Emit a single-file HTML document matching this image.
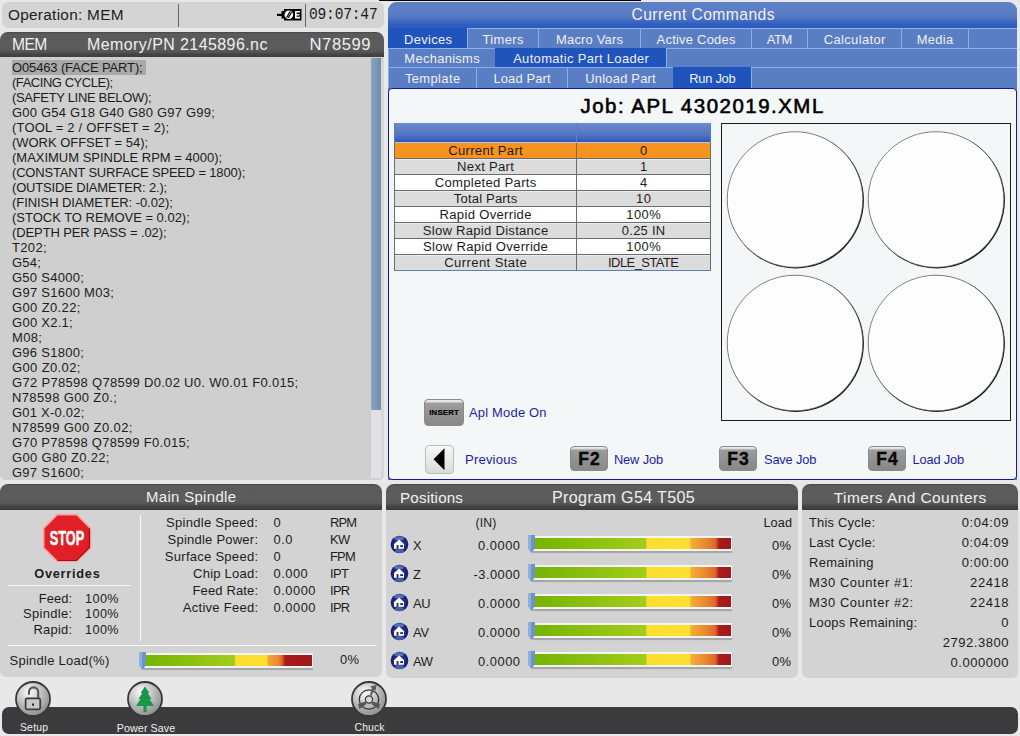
<!DOCTYPE html>
<html><head><meta charset="utf-8">
<style>
*{margin:0;padding:0;box-sizing:border-box}
html,body{width:1020px;height:736px;overflow:hidden;background:#e8e8e8;font-family:"Liberation Sans",sans-serif;color:#1c1c1c}
.a{position:absolute}
.t{position:absolute;white-space:nowrap;line-height:1}
.hdr{background:linear-gradient(#484848 0,#5b5b5b 2px,#5c5c5c 60%,#555 78%,#454545 84%,#3c3c3c 100%)}
.mono{font-family:"Liberation Mono",monospace}
.tab{position:absolute;height:20px;background:#5a7ec3;border-top:1px solid #8daee6;border-left:1px solid #8daee6}
.tab.on{background:#1f54bc;border-color:#1f54bc}
.key{position:absolute;border-radius:4px;background:linear-gradient(#f0f0f0,#d8d8d8 8%,#9c9c9c 14%,#939393 50%,#888 100%);border:1px solid #8a8a8a}
.lnk{position:absolute;color:#1e1ea0;white-space:nowrap;line-height:1}
.w{color:#f0f0f0}
</style></head><body>
<div class="a" style="left:379px;top:0;width:262px;height:1.2px;background:#000"></div>
<div class="a" style="left:2px;top:2px;width:382px;height:26px;background:#d4d4d4;border-radius:6px"></div>
<div class="t" style="left:8.00px;top:6.81px;font-size:15.37px;letter-spacing:0.281px;">Operation: MEM</div>
<div class="a" style="left:178px;top:4px;width:1px;height:23px;background:#666"></div>
<div class="a" style="left:305px;top:4px;width:1px;height:23px;background:#666"></div>
<svg class="a" style="left:276px;top:8px" width="27" height="14" viewBox="0 0 27 14">
<rect x="1" y="5.8" width="6" height="2.2" fill="#000"/>
<path d="M5.5 3 H8 V1 H25.5 V12.5 H8 V10.5 H5.5 Z" fill="#000"/>
<circle cx="12.8" cy="6.7" r="4.3" fill="#fff"/>
<path d="M10.6 9.6 L14.2 3.4 M12.3 9.9 L15.6 4.2" stroke="#000" stroke-width="1.1"/>
<path d="M19 3 H24 V4.6 H20.6 V5.9 H23.4 V7.4 H20.6 V8.8 H24 V10.4 H19 Z" fill="#fff"/>
</svg>
<div class="t mono" style="left:309px;top:6.5px;font-size:14.6px;transform:scaleY(1.15);transform-origin:0 50%;letter-spacing:-0.2px">09:07:47</div>
<div class="a hdr" style="left:0;top:32px;width:384px;height:25.5px;border-radius:8px 8px 0 0"></div>
<div class="t w" style="left:12.00px;top:36.71px;font-size:15.58px;letter-spacing:-0.566px;">MEM</div>
<div class="t w" style="left:87.00px;top:37.02px;font-size:15.95px;letter-spacing:0.450px;">Memory/PN 2145896.nc</div>
<div class="t w" style="left:309.50px;top:36.68px;font-size:16.64px;letter-spacing:0.565px;">N78599</div>
<div class="a" style="left:0;top:57px;width:384px;height:422.5px;background:#cfcfcf;border-radius:0 0 5px 5px"></div>
<div class="a" style="left:381px;top:57px;width:3px;height:420px;background:#d6d6d6"></div>
<div class="a" style="left:370.5px;top:58px;width:10.5px;height:420px;background:#e0e0e6"></div>
<div class="a" style="left:370.5px;top:58px;width:10.5px;height:352px;background:linear-gradient(90deg,#8aa6c0,#7b98b6 50%,#6f8cab)"></div>
<div class="a" style="left:12px;top:60px;width:134px;height:15px;background:#a9a9a9"></div>
<div class="t" style="left:12.00px;top:61.01px;font-size:12.99px;letter-spacing:-0.130px;">O05463 (FACE PART);</div>
<div class="t" style="left:12.00px;top:76.01px;font-size:12.99px;letter-spacing:-0.450px;">(FACING CYCLE);</div>
<div class="t" style="left:12.00px;top:91.01px;font-size:12.99px;letter-spacing:-0.314px;">(SAFETY LINE BELOW);</div>
<div class="t" style="left:12.00px;top:106.01px;font-size:12.99px;letter-spacing:0.214px;">G00 G54 G18 G40 G80 G97 G99;</div>
<div class="t" style="left:12.00px;top:121.01px;font-size:12.99px;letter-spacing:0.194px;">(TOOL = 2 / OFFSET = 2);</div>
<div class="t" style="left:12.00px;top:136.01px;font-size:12.99px;letter-spacing:-0.024px;">(WORK OFFSET = 54);</div>
<div class="t" style="left:12.00px;top:151.01px;font-size:12.99px;letter-spacing:-0.006px;">(MAXIMUM SPINDLE RPM = 4000);</div>
<div class="t" style="left:12.00px;top:166.01px;font-size:12.99px;letter-spacing:-0.176px;">(CONSTANT SURFACE SPEED = 1800);</div>
<div class="t" style="left:12.00px;top:181.01px;font-size:12.99px;letter-spacing:-0.160px;">(OUTSIDE DIAMETER: 2.);</div>
<div class="t" style="left:12.00px;top:196.01px;font-size:12.99px;letter-spacing:-0.061px;">(FINISH DIAMETER: -0.02);</div>
<div class="t" style="left:12.00px;top:211.01px;font-size:12.99px;letter-spacing:-0.004px;">(STOCK TO REMOVE = 0.02);</div>
<div class="t" style="left:12.00px;top:226.01px;font-size:12.99px;letter-spacing:-0.099px;">(DEPTH PER PASS = .02);</div>
<div class="t" style="left:12.00px;top:241.01px;font-size:12.99px;letter-spacing:0.357px;">T202;</div>
<div class="t" style="left:12.00px;top:256.01px;font-size:12.99px;letter-spacing:0.264px;">G54;</div>
<div class="t" style="left:12.00px;top:271.01px;font-size:12.99px;letter-spacing:0.275px;">G50 S4000;</div>
<div class="t" style="left:12.00px;top:286.01px;font-size:12.99px;letter-spacing:0.281px;">G97 S1600 M03;</div>
<div class="t" style="left:12.00px;top:301.01px;font-size:12.99px;letter-spacing:0.381px;">G00 Z0.22;</div>
<div class="t" style="left:12.00px;top:316.01px;font-size:12.99px;letter-spacing:0.278px;">G00 X2.1;</div>
<div class="t" style="left:12.00px;top:331.01px;font-size:12.99px;letter-spacing:0.354px;">M08;</div>
<div class="t" style="left:12.00px;top:346.01px;font-size:12.99px;letter-spacing:0.275px;">G96 S1800;</div>
<div class="t" style="left:12.00px;top:361.01px;font-size:12.99px;letter-spacing:0.381px;">G00 Z0.02;</div>
<div class="t" style="left:12.00px;top:376.01px;font-size:12.99px;letter-spacing:0.313px;">G72 P78598 Q78599 D0.02 U0. W0.01 F0.015;</div>
<div class="t" style="left:12.00px;top:391.01px;font-size:12.99px;letter-spacing:0.373px;">N78598 G00 Z0.;</div>
<div class="t" style="left:12.00px;top:406.01px;font-size:12.99px;letter-spacing:0.233px;">G01 X-0.02;</div>
<div class="t" style="left:12.00px;top:421.01px;font-size:12.99px;letter-spacing:0.396px;">N78599 G00 Z0.02;</div>
<div class="t" style="left:12.00px;top:436.01px;font-size:12.99px;letter-spacing:0.304px;">G70 P78598 Q78599 F0.015;</div>
<div class="t" style="left:12.00px;top:451.01px;font-size:12.99px;letter-spacing:0.331px;">G00 G80 Z0.22;</div>
<div class="t" style="left:12.00px;top:466.01px;font-size:12.99px;letter-spacing:0.275px;">G97 S1600;</div>
<div class="a" style="left:388px;top:2px;width:629px;height:478px;background:#5b7fc4;border-radius:9px 9px 0 0"></div>
<div class="a" style="left:388px;top:2px;width:629px;height:26px;background:linear-gradient(#5e81c6,#597cc4 50%,#4870c2 68%,#305fc0 85%,#2a5bbf);border-radius:9px 9px 0 0"></div>
<div class="t w" style="left:403.22px;width:600px;text-align:center;top:7.18px;font-size:15.65px;letter-spacing:0.448px;">Current Commands</div>
<div class="tab on" style="left:388px;top:28px;width:79px;"></div>
<div class="t w" style="left:128.15px;width:600px;text-align:center;top:33.53px;font-size:12.93px;letter-spacing:0.298px;">Devices</div>
<div class="tab" style="left:467px;top:28px;width:71px;"></div>
<div class="t w" style="left:203.18px;width:600px;text-align:center;top:33.53px;font-size:12.93px;letter-spacing:0.367px;">Timers</div>
<div class="tab" style="left:538px;top:28px;width:102px;"></div>
<div class="t w" style="left:289.59px;width:600px;text-align:center;top:33.53px;font-size:12.93px;letter-spacing:0.189px;">Macro Vars</div>
<div class="tab" style="left:640px;top:28px;width:111px;"></div>
<div class="t w" style="left:396.13px;width:600px;text-align:center;top:33.53px;font-size:12.93px;letter-spacing:0.251px;">Active Codes</div>
<div class="tab" style="left:751px;top:28px;width:56px;"></div>
<div class="t w" style="left:479.34px;width:600px;text-align:center;top:33.53px;font-size:12.93px;letter-spacing:-0.320px;">ATM</div>
<div class="tab" style="left:807px;top:28px;width:94px;"></div>
<div class="t w" style="left:554.69px;width:600px;text-align:center;top:33.53px;font-size:12.93px;letter-spacing:0.373px;">Calculator</div>
<div class="tab" style="left:901px;top:28px;width:67px;"></div>
<div class="t w" style="left:635.14px;width:600px;text-align:center;top:33.53px;font-size:12.93px;letter-spacing:0.284px;">Media</div>
<div class="tab" style="left:968px;top:28px;width:49px;"></div>
<div class="tab" style="left:388px;top:48px;width:107px;height:19px"></div>
<div class="t w" style="left:142.15px;width:600px;text-align:center;top:52.53px;font-size:12.93px;letter-spacing:0.308px;">Mechanisms</div>
<div class="tab on" style="left:495px;top:48px;width:171px;height:19px"></div>
<div class="t w" style="left:281.18px;width:600px;text-align:center;top:52.53px;font-size:12.93px;letter-spacing:0.358px;">Automatic Part Loader</div>
<div class="tab" style="left:666px;top:48px;width:351px;height:19px"></div>
<div class="tab" style="left:388px;top:67px;width:88px;height:21px"></div>
<div class="t w" style="left:132.70px;width:600px;text-align:center;top:72.53px;font-size:12.93px;letter-spacing:0.399px;">Template</div>
<div class="tab" style="left:476px;top:67px;width:91px;height:21px"></div>
<div class="t w" style="left:222.06px;width:600px;text-align:center;top:72.53px;font-size:12.93px;letter-spacing:0.128px;">Load Part</div>
<div class="tab" style="left:567px;top:67px;width:106px;height:21px"></div>
<div class="t w" style="left:320.61px;width:600px;text-align:center;top:72.53px;font-size:12.93px;letter-spacing:0.219px;">Unload Part</div>
<div class="tab on" style="left:673px;top:67px;width:78px;height:21px"></div>
<div class="t w" style="left:412.35px;width:600px;text-align:center;top:72.53px;font-size:12.93px;letter-spacing:-0.299px;">Run Job</div>
<div class="tab" style="left:751px;top:67px;width:266px;height:21px"></div>
<div class="a" style="left:388px;top:88px;width:629px;height:392px;background:#f4f7f8;border:1.5px solid #16169a;border-radius:4px"></div>
<div class="t" style="left:580.50px;top:95.77px;font-size:20.46px;letter-spacing:1.515px;font-weight:bold;color:#000;font-weight:normal;-webkit-text-stroke:0.6px #000">Job: APL 4302019.XML</div>
<div class="a" style="left:394px;top:123px;width:317px;height:148px;background:#5f7fb5"></div>
<div class="a" style="left:394px;top:142px;width:317px;height:128px;background:#6c6c6c"></div>
<div class="a" style="left:395px;top:123px;width:181px;height:19px;background:linear-gradient(#6a8bce,#5678c4 55%,#4067c0 80%,#2d52c4)"></div>
<div class="a" style="left:577px;top:123px;width:133px;height:19px;background:linear-gradient(#6a8bce,#5678c4 55%,#4067c0 80%,#2d52c4)"></div>
<div class="a" style="left:395px;top:142px;width:315px;height:1px;background:#b4c6ec"></div>
<div class="a" style="left:395px;top:143px;width:181px;height:15px;background:#f7931e;"></div><div class="a" style="left:577px;top:143px;width:133px;height:15px;background:#f7931e;"></div><div class="t" style="left:185.64px;width:600px;text-align:center;top:143.65px;font-size:13.09px;letter-spacing:0.283px;">Current Part</div>
<div class="t" style="left:343.78px;width:600px;text-align:center;top:144.53px;font-size:12.93px;letter-spacing:0.570px;">0</div>
<div class="a" style="left:395px;top:159px;width:181px;height:15px;background:#dcdcdc;border-top:1px solid #e8ecf4;"></div><div class="a" style="left:577px;top:159px;width:133px;height:15px;background:#dcdcdc;border-top:1px solid #e8ecf4;"></div><div class="t" style="left:185.64px;width:600px;text-align:center;top:159.65px;font-size:13.09px;letter-spacing:0.279px;">Next Part</div>
<div class="t" style="left:343.78px;width:600px;text-align:center;top:160.53px;font-size:12.93px;letter-spacing:0.570px;">1</div>
<div class="a" style="left:395px;top:175px;width:181px;height:15px;background:#ffffff;"></div><div class="a" style="left:577px;top:175px;width:133px;height:15px;background:#ffffff;"></div><div class="t" style="left:185.65px;width:600px;text-align:center;top:175.65px;font-size:13.09px;letter-spacing:0.307px;">Completed Parts</div>
<div class="t" style="left:343.78px;width:600px;text-align:center;top:176.53px;font-size:12.93px;letter-spacing:0.570px;">4</div>
<div class="a" style="left:395px;top:191px;width:181px;height:15px;background:#dcdcdc;border-top:1px solid #e8ecf4;"></div><div class="a" style="left:577px;top:191px;width:133px;height:15px;background:#dcdcdc;border-top:1px solid #e8ecf4;"></div><div class="t" style="left:185.58px;width:600px;text-align:center;top:191.65px;font-size:13.09px;letter-spacing:0.158px;">Total Parts</div>
<div class="t" style="left:343.78px;width:600px;text-align:center;top:192.53px;font-size:12.93px;letter-spacing:0.570px;">10</div>
<div class="a" style="left:395px;top:207px;width:181px;height:15px;background:#ffffff;"></div><div class="a" style="left:577px;top:207px;width:133px;height:15px;background:#ffffff;"></div><div class="t" style="left:185.65px;width:600px;text-align:center;top:207.65px;font-size:13.09px;letter-spacing:0.308px;">Rapid Override</div>
<div class="t" style="left:343.73px;width:600px;text-align:center;top:208.53px;font-size:12.93px;letter-spacing:0.451px;">100%</div>
<div class="a" style="left:395px;top:223px;width:181px;height:15px;background:#dcdcdc;border-top:1px solid #e8ecf4;"></div><div class="a" style="left:577px;top:223px;width:133px;height:15px;background:#dcdcdc;border-top:1px solid #e8ecf4;"></div><div class="t" style="left:185.63px;width:600px;text-align:center;top:223.65px;font-size:13.09px;letter-spacing:0.262px;">Slow Rapid Distance</div>
<div class="t" style="left:343.65px;width:600px;text-align:center;top:224.53px;font-size:12.93px;letter-spacing:0.296px;">0.25 IN</div>
<div class="a" style="left:395px;top:239px;width:181px;height:15px;background:#ffffff;"></div><div class="a" style="left:577px;top:239px;width:133px;height:15px;background:#ffffff;"></div><div class="t" style="left:185.64px;width:600px;text-align:center;top:239.65px;font-size:13.09px;letter-spacing:0.271px;">Slow Rapid Override</div>
<div class="t" style="left:343.73px;width:600px;text-align:center;top:240.53px;font-size:12.93px;letter-spacing:0.451px;">100%</div>
<div class="a" style="left:395px;top:255px;width:181px;height:15px;background:#dcdcdc;border-top:1px solid #e8ecf4;"></div><div class="a" style="left:577px;top:255px;width:133px;height:15px;background:#dcdcdc;border-top:1px solid #e8ecf4;"></div><div class="t" style="left:185.70px;width:600px;text-align:center;top:255.65px;font-size:13.09px;letter-spacing:0.396px;">Current State</div>
<div class="t" style="left:343.24px;width:600px;text-align:center;top:256.53px;font-size:12.93px;letter-spacing:-0.529px;">IDLE_STATE</div>
<div class="a" style="left:721px;top:123px;width:290px;height:298px;border:1.5px solid #1a1a1a;background:#f4f7f8"></div>
<svg class="a" style="left:721px;top:123px" width="290" height="298"><circle cx="74.7" cy="77.2" r="68.2" fill="#111"/><circle cx="74" cy="76.5" r="67.8" fill="#fdfdfd" stroke="#555" stroke-width="0.7"/><circle cx="215.7" cy="77.2" r="68.2" fill="#111"/><circle cx="215" cy="76.5" r="67.8" fill="#fdfdfd" stroke="#555" stroke-width="0.7"/><circle cx="74.7" cy="220.7" r="68.2" fill="#111"/><circle cx="74" cy="220" r="67.8" fill="#fdfdfd" stroke="#555" stroke-width="0.7"/><circle cx="215.7" cy="220.7" r="68.2" fill="#111"/><circle cx="215" cy="220" r="67.8" fill="#fdfdfd" stroke="#555" stroke-width="0.7"/></svg>
<div class="key" style="left:424px;top:399px;width:40px;height:27px"></div>
<div class="t" style="left:144.08px;width:600px;text-align:center;top:408.58px;font-size:7.84px;letter-spacing:0.163px;font-weight:bold;color:#000;-webkit-text-stroke:0.2px #000">INSERT</div>
<div class="lnk" style="left:469.00px;top:406.53px;font-size:12.93px;letter-spacing:0.212px;">Apl Mode On</div>
<div class="a" style="left:425px;top:445px;width:29px;height:29px;border-radius:4px;background:linear-gradient(#f8f8f8,#dadada);border:1px solid #bcbcbc"></div>
<svg class="a" style="left:425px;top:445px" width="29" height="29"><path d="M19.5 3.2 L19.5 25.3 L8.5 14.25 Z" fill="#000"/></svg>
<div class="lnk" style="left:465.00px;top:453.43px;font-size:13.14px;letter-spacing:0.158px;">Previous</div>
<div class="key" style="left:570px;top:446px;width:38px;height:25px"></div>
<div class="t" style="left:289.59px;width:600px;text-align:center;top:451.25px;font-size:17.49px;letter-spacing:1.171px;font-weight:bold;color:#0a0a0a;-webkit-text-stroke:0.35px #000">F2</div>
<div class="lnk" style="left:614.00px;top:453.59px;font-size:12.83px;letter-spacing:-0.145px;">New Job</div>
<div class="key" style="left:719px;top:446px;width:38px;height:25px"></div>
<div class="t" style="left:438.59px;width:600px;text-align:center;top:451.25px;font-size:17.49px;letter-spacing:1.171px;font-weight:bold;color:#0a0a0a;-webkit-text-stroke:0.35px #000">F3</div>
<div class="lnk" style="left:764.00px;top:453.59px;font-size:12.83px;letter-spacing:-0.160px;">Save Job</div>
<div class="key" style="left:868px;top:446px;width:38px;height:25px"></div>
<div class="t" style="left:587.59px;width:600px;text-align:center;top:451.25px;font-size:17.49px;letter-spacing:1.171px;font-weight:bold;color:#0a0a0a;-webkit-text-stroke:0.35px #000">F4</div>
<div class="lnk" style="left:912.50px;top:453.59px;font-size:12.83px;letter-spacing:-0.156px;">Load Job</div>
<div class="a hdr" style="left:0;top:484px;width:382px;height:26px;border-radius:8px 8px 0 0"></div>
<div class="t w" style="left:-108.83px;width:600px;text-align:center;top:490.03px;font-size:14.95px;letter-spacing:0.336px;">Main Spindle</div>
<div class="a" style="left:0;top:510px;width:382px;height:167px;background:#d3d3d3;border-radius:0 0 6px 6px"></div>
<div class="a hdr" style="left:386px;top:484px;width:412px;height:26px;border-radius:8px 8px 0 0"></div>
<div class="t w" style="left:400.00px;top:489.92px;font-size:15.16px;letter-spacing:0.180px;">Positions</div>
<div class="t w" style="left:552.00px;top:489.44px;font-size:16.11px;letter-spacing:0.349px;">Program G54 T505</div>
<div class="a" style="left:386px;top:510px;width:412px;height:168px;background:#d3d3d3;border-radius:0 0 6px 6px"></div>
<div class="a hdr" style="left:802px;top:484px;width:216px;height:26px;border-radius:8px 8px 0 0"></div>
<div class="t w" style="left:610.22px;width:600px;text-align:center;top:489.76px;font-size:15.48px;letter-spacing:0.436px;">Timers And Counters</div>
<div class="a" style="left:802px;top:510px;width:216px;height:168px;background:#d3d3d3;border-radius:0 0 6px 6px"></div>
<div class="a" style="left:2px;top:707px;width:1016px;height:27px;background:#3b3b3d;border-radius:7px"></div>
<svg class="a" style="left:42px;top:513px" width="50" height="50" viewBox="0 0 50 50">
<polygon points="14.8,0.8 35.2,0.8 49.2,14.8 49.2,35.2 35.2,49.2 14.8,49.2 0.8,35.2 0.8,14.8" fill="#f3a6a6"/>
<polygon points="15.5,2.5 34.5,2.5 47.5,15.5 47.5,34.5 34.5,47.5 15.5,47.5 2.5,34.5 2.5,15.5" fill="#e21f26"/>
<path d="M47.5 15.5 V34.5 L34.5 47.5 H15.5" fill="none" stroke="#a01010" stroke-width="1.2"/>
<text x="25" y="32" text-anchor="middle" font-family="Liberation Sans" font-weight="bold" font-size="20" fill="#fff" stroke="#fff" stroke-width="0.5" textLength="34.5" lengthAdjust="spacingAndGlyphs">STOP</text>
</svg>
<div class="t" style="left:-232.63px;width:600px;text-align:center;top:568.11px;font-size:12.77px;letter-spacing:0.735px;font-weight:bold;">Overrides</div>
<div class="a" style="left:8px;top:585px;width:123px;height:1px;background:#f6f6f6"></div>
<div class="t" style="right:947.97px;top:592.53px;font-size:12.93px;letter-spacing:0.029px;">Feed:</div>
<div class="t" style="left:85.00px;top:592.69px;font-size:12.61px;letter-spacing:0.440px;">100%</div>
<div class="t" style="right:947.67px;top:608.13px;font-size:12.93px;letter-spacing:0.328px;">Spindle:</div>
<div class="t" style="left:85.00px;top:608.29px;font-size:12.61px;letter-spacing:0.440px;">100%</div>
<div class="t" style="right:947.78px;top:624.03px;font-size:12.93px;letter-spacing:0.215px;">Rapid:</div>
<div class="t" style="left:85.00px;top:624.19px;font-size:12.61px;letter-spacing:0.440px;">100%</div>
<div class="a" style="left:140px;top:515px;width:1px;height:126px;background:#f6f6f6"></div>
<div class="t" style="right:761.73px;top:515.78px;font-size:13.04px;letter-spacing:0.271px;">Spindle Speed:</div>
<div class="t" style="left:273.50px;top:516.86px;font-size:12.88px;letter-spacing:0.567px;">0</div>
<div class="t" style="left:330.00px;top:516.83px;font-size:12.93px;letter-spacing:-0.792px;">RPM</div>
<div class="t" style="right:761.79px;top:532.83px;font-size:13.04px;letter-spacing:0.211px;">Spindle Power:</div>
<div class="t" style="left:273.50px;top:533.91px;font-size:12.88px;letter-spacing:0.473px;">0.0</div>
<div class="t" style="left:330.00px;top:533.88px;font-size:12.93px;letter-spacing:-0.601px;">KW</div>
<div class="t" style="right:761.74px;top:549.88px;font-size:13.04px;letter-spacing:0.256px;">Surface Speed:</div>
<div class="t" style="left:273.50px;top:550.96px;font-size:12.88px;letter-spacing:0.567px;">0</div>
<div class="t" style="left:330.00px;top:550.93px;font-size:12.93px;letter-spacing:-0.799px;">FPM</div>
<div class="t" style="right:761.79px;top:566.93px;font-size:13.04px;letter-spacing:0.210px;">Chip Load:</div>
<div class="t" style="left:273.50px;top:568.01px;font-size:12.88px;letter-spacing:0.511px;">0.000</div>
<div class="t" style="left:330.00px;top:567.98px;font-size:12.93px;letter-spacing:-0.570px;">IPT</div>
<div class="t" style="right:761.89px;top:583.98px;font-size:13.04px;letter-spacing:0.110px;">Feed Rate:</div>
<div class="t" style="left:273.50px;top:585.06px;font-size:12.88px;letter-spacing:0.520px;">0.0000</div>
<div class="t" style="left:330.00px;top:585.03px;font-size:12.93px;letter-spacing:-0.709px;">IPR</div>
<div class="t" style="right:761.75px;top:601.03px;font-size:13.04px;letter-spacing:0.248px;">Active Feed:</div>
<div class="t" style="left:273.50px;top:602.11px;font-size:12.88px;letter-spacing:0.520px;">0.0000</div>
<div class="t" style="left:330.00px;top:602.08px;font-size:12.93px;letter-spacing:-0.709px;">IPR</div>
<div class="a" style="left:8px;top:645px;width:369px;height:1px;background:#f6f6f6"></div>
<div class="t" style="left:9.50px;top:654.00px;font-size:13.01px;letter-spacing:0.261px;">Spindle Load(%)</div>
<div class="t" style="right:660.67px;top:654.03px;font-size:12.93px;letter-spacing:0.332px;">0%</div>
<div class="a" style="left:143px;top:653px;width:170px;height:15px;background:#f4f4f4;box-shadow:0 2px 1px rgba(0,0,0,.22);border-radius:1px"></div><div class="a" style="left:144px;top:655px;width:168px;height:11px;background:linear-gradient(90deg,#74b400 0%,#a4cc1c 54%,#fcde2c 54.5%,#fde030 73%,#f4a838 74%,#e88a30 80%,#dc6a2c 82%,#a81c1c 84%,#a01818 100%)"></div><svg class="a" style="left:138px;top:652px" width="9" height="19"><path d="M1 0 H8 V13 L4.5 18 L1 13 Z" fill="#6e93c9"/><path d="M1 0 H4 V16 L1 13 Z" fill="#8eb0dc"/></svg>
<div class="t" style="left:186.08px;width:600px;text-align:center;top:516.89px;font-size:12.21px;letter-spacing:0.165px;">(IN)</div>
<div class="t" style="right:227.88px;top:516.66px;font-size:12.68px;letter-spacing:0.122px;">Load</div>
<svg class="a" style="left:390px;top:535.0px" width="19" height="19" viewBox="0 0 19 19"><defs><radialGradient id="hg0" cx="50%" cy="50%" r="55%"><stop offset="0" stop-color="#3a4a9a"/><stop offset="0.7" stop-color="#1a2480"/><stop offset="1" stop-color="#0c145a"/></radialGradient></defs><circle cx="9.5" cy="9.5" r="8.8" fill="url(#hg0)"/><ellipse cx="9" cy="3.2" rx="5" ry="2" fill="#8aa6e0" opacity="0.55"/><ellipse cx="9.5" cy="16" rx="4.5" ry="2" fill="#7a9ad8" opacity="0.5"/><path d="M3.6 9.6 L9.1 4.6 L14.4 9.6 H14 V13.8 H4 V9.6 Z" fill="#fff"/><rect x="6.6" y="10" width="1.9" height="3.8" fill="#333"/><rect x="10.2" y="10.2" width="2.8" height="1.8" fill="#1a2480"/></svg>
<div class="t" style="left:413.00px;top:540.33px;font-size:12.93px;letter-spacing:-0.268px;">X</div>
<div class="t" style="right:499.48px;top:540.36px;font-size:12.88px;letter-spacing:0.520px;">0.0000</div>
<div class="a" style="left:532px;top:536px;width:200px;height:15px;background:#f4f4f4;box-shadow:0 2px 1px rgba(0,0,0,.22);border-radius:1px"></div><div class="a" style="left:533px;top:538px;width:198px;height:11px;background:linear-gradient(90deg,#74b400 0%,#a4cc1c 57%,#fcde2c 57.5%,#fde030 79%,#f5ac34 80%,#e88a30 87%,#dc6a2c 92%,#a81c1c 94%,#a01818 100%)"></div><svg class="a" style="left:527px;top:535px" width="9" height="19"><path d="M1 0 H8 V13 L4.5 18 L1 13 Z" fill="#6e93c9"/><path d="M1 0 H4 V16 L1 13 Z" fill="#8eb0dc"/></svg>
<div class="t" style="right:228.67px;top:540.33px;font-size:12.93px;letter-spacing:0.332px;">0%</div>
<svg class="a" style="left:390px;top:563.9px" width="19" height="19" viewBox="0 0 19 19"><defs><radialGradient id="hg1" cx="50%" cy="50%" r="55%"><stop offset="0" stop-color="#3a4a9a"/><stop offset="0.7" stop-color="#1a2480"/><stop offset="1" stop-color="#0c145a"/></radialGradient></defs><circle cx="9.5" cy="9.5" r="8.8" fill="url(#hg1)"/><ellipse cx="9" cy="3.2" rx="5" ry="2" fill="#8aa6e0" opacity="0.55"/><ellipse cx="9.5" cy="16" rx="4.5" ry="2" fill="#7a9ad8" opacity="0.5"/><path d="M3.6 9.6 L9.1 4.6 L14.4 9.6 H14 V13.8 H4 V9.6 Z" fill="#fff"/><rect x="6.6" y="10" width="1.9" height="3.8" fill="#333"/><rect x="10.2" y="10.2" width="2.8" height="1.8" fill="#1a2480"/></svg>
<div class="t" style="left:413.00px;top:569.23px;font-size:12.93px;letter-spacing:0.458px;">Z</div>
<div class="t" style="right:499.54px;top:569.26px;font-size:12.88px;letter-spacing:0.460px;">-3.0000</div>
<div class="a" style="left:532px;top:565px;width:200px;height:15px;background:#f4f4f4;box-shadow:0 2px 1px rgba(0,0,0,.22);border-radius:1px"></div><div class="a" style="left:533px;top:567px;width:198px;height:11px;background:linear-gradient(90deg,#74b400 0%,#a4cc1c 57%,#fcde2c 57.5%,#fde030 79%,#f5ac34 80%,#e88a30 87%,#dc6a2c 92%,#a81c1c 94%,#a01818 100%)"></div><svg class="a" style="left:527px;top:564px" width="9" height="19"><path d="M1 0 H8 V13 L4.5 18 L1 13 Z" fill="#6e93c9"/><path d="M1 0 H4 V16 L1 13 Z" fill="#8eb0dc"/></svg>
<div class="t" style="right:228.67px;top:569.23px;font-size:12.93px;letter-spacing:0.332px;">0%</div>
<svg class="a" style="left:390px;top:592.8px" width="19" height="19" viewBox="0 0 19 19"><defs><radialGradient id="hg2" cx="50%" cy="50%" r="55%"><stop offset="0" stop-color="#3a4a9a"/><stop offset="0.7" stop-color="#1a2480"/><stop offset="1" stop-color="#0c145a"/></radialGradient></defs><circle cx="9.5" cy="9.5" r="8.8" fill="url(#hg2)"/><ellipse cx="9" cy="3.2" rx="5" ry="2" fill="#8aa6e0" opacity="0.55"/><ellipse cx="9.5" cy="16" rx="4.5" ry="2" fill="#7a9ad8" opacity="0.5"/><path d="M3.6 9.6 L9.1 4.6 L14.4 9.6 H14 V13.8 H4 V9.6 Z" fill="#fff"/><rect x="6.6" y="10" width="1.9" height="3.8" fill="#333"/><rect x="10.2" y="10.2" width="2.8" height="1.8" fill="#1a2480"/></svg>
<div class="t" style="left:413.00px;top:598.13px;font-size:12.93px;letter-spacing:-0.345px;">AU</div>
<div class="t" style="right:499.48px;top:598.16px;font-size:12.88px;letter-spacing:0.520px;">0.0000</div>
<div class="a" style="left:532px;top:594px;width:200px;height:15px;background:#f4f4f4;box-shadow:0 2px 1px rgba(0,0,0,.22);border-radius:1px"></div><div class="a" style="left:533px;top:596px;width:198px;height:11px;background:linear-gradient(90deg,#74b400 0%,#a4cc1c 57%,#fcde2c 57.5%,#fde030 79%,#f5ac34 80%,#e88a30 87%,#dc6a2c 92%,#a81c1c 94%,#a01818 100%)"></div><svg class="a" style="left:527px;top:593px" width="9" height="19"><path d="M1 0 H8 V13 L4.5 18 L1 13 Z" fill="#6e93c9"/><path d="M1 0 H4 V16 L1 13 Z" fill="#8eb0dc"/></svg>
<div class="t" style="right:228.67px;top:598.13px;font-size:12.93px;letter-spacing:0.332px;">0%</div>
<svg class="a" style="left:390px;top:621.7px" width="19" height="19" viewBox="0 0 19 19"><defs><radialGradient id="hg3" cx="50%" cy="50%" r="55%"><stop offset="0" stop-color="#3a4a9a"/><stop offset="0.7" stop-color="#1a2480"/><stop offset="1" stop-color="#0c145a"/></radialGradient></defs><circle cx="9.5" cy="9.5" r="8.8" fill="url(#hg3)"/><ellipse cx="9" cy="3.2" rx="5" ry="2" fill="#8aa6e0" opacity="0.55"/><ellipse cx="9.5" cy="16" rx="4.5" ry="2" fill="#7a9ad8" opacity="0.5"/><path d="M3.6 9.6 L9.1 4.6 L14.4 9.6 H14 V13.8 H4 V9.6 Z" fill="#fff"/><rect x="6.6" y="10" width="1.9" height="3.8" fill="#333"/><rect x="10.2" y="10.2" width="2.8" height="1.8" fill="#1a2480"/></svg>
<div class="t" style="left:413.00px;top:627.03px;font-size:12.93px;letter-spacing:-0.190px;">AV</div>
<div class="t" style="right:499.48px;top:627.06px;font-size:12.88px;letter-spacing:0.520px;">0.0000</div>
<div class="a" style="left:532px;top:623px;width:200px;height:15px;background:#f4f4f4;box-shadow:0 2px 1px rgba(0,0,0,.22);border-radius:1px"></div><div class="a" style="left:533px;top:625px;width:198px;height:11px;background:linear-gradient(90deg,#74b400 0%,#a4cc1c 57%,#fcde2c 57.5%,#fde030 79%,#f5ac34 80%,#e88a30 87%,#dc6a2c 92%,#a81c1c 94%,#a01818 100%)"></div><svg class="a" style="left:527px;top:622px" width="9" height="19"><path d="M1 0 H8 V13 L4.5 18 L1 13 Z" fill="#6e93c9"/><path d="M1 0 H4 V16 L1 13 Z" fill="#8eb0dc"/></svg>
<div class="t" style="right:228.67px;top:627.03px;font-size:12.93px;letter-spacing:0.332px;">0%</div>
<svg class="a" style="left:390px;top:650.6px" width="19" height="19" viewBox="0 0 19 19"><defs><radialGradient id="hg4" cx="50%" cy="50%" r="55%"><stop offset="0" stop-color="#3a4a9a"/><stop offset="0.7" stop-color="#1a2480"/><stop offset="1" stop-color="#0c145a"/></radialGradient></defs><circle cx="9.5" cy="9.5" r="8.8" fill="url(#hg4)"/><ellipse cx="9" cy="3.2" rx="5" ry="2" fill="#8aa6e0" opacity="0.55"/><ellipse cx="9.5" cy="16" rx="4.5" ry="2" fill="#7a9ad8" opacity="0.5"/><path d="M3.6 9.6 L9.1 4.6 L14.4 9.6 H14 V13.8 H4 V9.6 Z" fill="#fff"/><rect x="6.6" y="10" width="1.9" height="3.8" fill="#333"/><rect x="10.2" y="10.2" width="2.8" height="1.8" fill="#1a2480"/></svg>
<div class="t" style="left:413.00px;top:655.93px;font-size:12.93px;letter-spacing:-0.305px;">AW</div>
<div class="t" style="right:499.48px;top:655.96px;font-size:12.88px;letter-spacing:0.520px;">0.0000</div>
<div class="a" style="left:532px;top:652px;width:200px;height:15px;background:#f4f4f4;box-shadow:0 2px 1px rgba(0,0,0,.22);border-radius:1px"></div><div class="a" style="left:533px;top:654px;width:198px;height:11px;background:linear-gradient(90deg,#74b400 0%,#a4cc1c 57%,#fcde2c 57.5%,#fde030 79%,#f5ac34 80%,#e88a30 87%,#dc6a2c 92%,#a81c1c 94%,#a01818 100%)"></div><svg class="a" style="left:527px;top:651px" width="9" height="19"><path d="M1 0 H8 V13 L4.5 18 L1 13 Z" fill="#6e93c9"/><path d="M1 0 H4 V16 L1 13 Z" fill="#8eb0dc"/></svg>
<div class="t" style="right:228.67px;top:655.93px;font-size:12.93px;letter-spacing:0.332px;">0%</div>
<div class="t" style="left:809.00px;top:516.93px;font-size:12.93px;letter-spacing:0.210px;">This Cycle:</div>
<div class="t" style="right:10.94px;top:515.91px;font-size:12.99px;letter-spacing:0.557px;">0:04:09</div>
<div class="t" style="left:809.00px;top:536.96px;font-size:12.93px;letter-spacing:0.252px;">Last Cycle:</div>
<div class="t" style="right:10.94px;top:535.94px;font-size:12.99px;letter-spacing:0.557px;">0:04:09</div>
<div class="t" style="left:809.00px;top:556.99px;font-size:12.93px;letter-spacing:0.329px;">Remaining</div>
<div class="t" style="right:10.94px;top:555.97px;font-size:12.99px;letter-spacing:0.557px;">0:00:00</div>
<div class="t" style="left:809.00px;top:577.02px;font-size:12.93px;letter-spacing:0.555px;">M30 Counter #1:</div>
<div class="t" style="right:10.93px;top:576.00px;font-size:12.99px;letter-spacing:0.572px;">22418</div>
<div class="t" style="left:809.00px;top:597.05px;font-size:12.93px;letter-spacing:0.555px;">M30 Counter #2:</div>
<div class="t" style="right:10.93px;top:596.03px;font-size:12.99px;letter-spacing:0.572px;">22418</div>
<div class="t" style="left:809.00px;top:617.08px;font-size:12.93px;letter-spacing:0.259px;">Loops Remaining:</div>
<div class="t" style="right:10.93px;top:616.06px;font-size:12.99px;letter-spacing:0.572px;">0</div>
<div class="t" style="right:10.96px;top:636.09px;font-size:12.99px;letter-spacing:0.540px;">2792.3800</div>
<div class="t" style="right:10.96px;top:656.12px;font-size:12.99px;letter-spacing:0.536px;">0.000000</div>
<svg class="a" style="left:14.0px;top:679.5px" width="38" height="38" viewBox="0 0 38 38"><defs><radialGradient id="g1" cx="38%" cy="30%" r="75%"><stop offset="0" stop-color="#ffffff"/><stop offset="0.25" stop-color="#dedede"/><stop offset="0.6" stop-color="#b4b4b4"/><stop offset="1" stop-color="#8a8a8a"/></radialGradient></defs><circle cx="19" cy="19" r="17" fill="url(#g1)" stroke="#383838" stroke-width="1.8"/><path d="M15 14.8 V12 A4.6 4.6 0 0 1 24.2 12 V18.5" fill="none" stroke="#555" stroke-width="2.1"/><rect x="11.6" y="18.3" width="14.6" height="11" rx="1.5" fill="#c8c8c8" stroke="#3a3a3a" stroke-width="1.7"/><rect x="18.2" y="23.5" width="1.8" height="2.2" fill="#111"/></svg>
<div class="t w" style="left:-265.86px;width:600px;text-align:center;top:723.31px;font-size:10.39px;letter-spacing:0.275px;">Setup</div>
<svg class="a" style="left:126.0px;top:679.5px" width="38" height="38" viewBox="0 0 38 38"><defs><radialGradient id="g2" cx="38%" cy="30%" r="75%"><stop offset="0" stop-color="#ffffff"/><stop offset="0.25" stop-color="#dedede"/><stop offset="0.6" stop-color="#b4b4b4"/><stop offset="1" stop-color="#8a8a8a"/></radialGradient></defs><circle cx="19" cy="19" r="17" fill="url(#g2)" stroke="#383838" stroke-width="1.8"/><path d="M19 6.5 L23.5 13 H21.8 L25.5 19 H23.5 L28 26 H10 L14.5 19 H12.5 L16.2 13 H14.5 Z" fill="#17984a"/><rect x="17.5" y="25" width="3.2" height="7" fill="#17984a"/></svg>
<div class="t w" style="left:-153.96px;width:600px;text-align:center;top:723.15px;font-size:10.71px;letter-spacing:0.082px;">Power Save</div>
<svg class="a" style="left:349.8px;top:679.5px" width="38" height="38" viewBox="0 0 38 38"><defs><radialGradient id="g3" cx="38%" cy="30%" r="75%"><stop offset="0" stop-color="#ffffff"/><stop offset="0.25" stop-color="#dedede"/><stop offset="0.6" stop-color="#b4b4b4"/><stop offset="1" stop-color="#8a8a8a"/></radialGradient></defs><circle cx="19" cy="19" r="17" fill="url(#g3)" stroke="#383838" stroke-width="1.8"/><circle cx="19" cy="19.5" r="9.7" fill="none" stroke="#333" stroke-width="1.3"/><circle cx="19" cy="19.5" r="3.6" fill="#d8d8d8" stroke="#333" stroke-width="1.2"/><path d="M20 15 L22 8 L20 6.5 L26.5 5 L25.5 11 L24 9.5 L21.5 16 Z" fill="#5a5a5a"/><path d="M15.5 21.5 L8 24 L9.5 29 L16.5 24 Z" fill="#555"/><path d="M22.5 21.5 L30 24 L28.5 29 L21.5 24 Z" fill="#555"/></svg>
<div class="t w" style="left:69.59px;width:600px;text-align:center;top:723.33px;font-size:10.34px;letter-spacing:0.176px;">Chuck</div>
</body></html>
